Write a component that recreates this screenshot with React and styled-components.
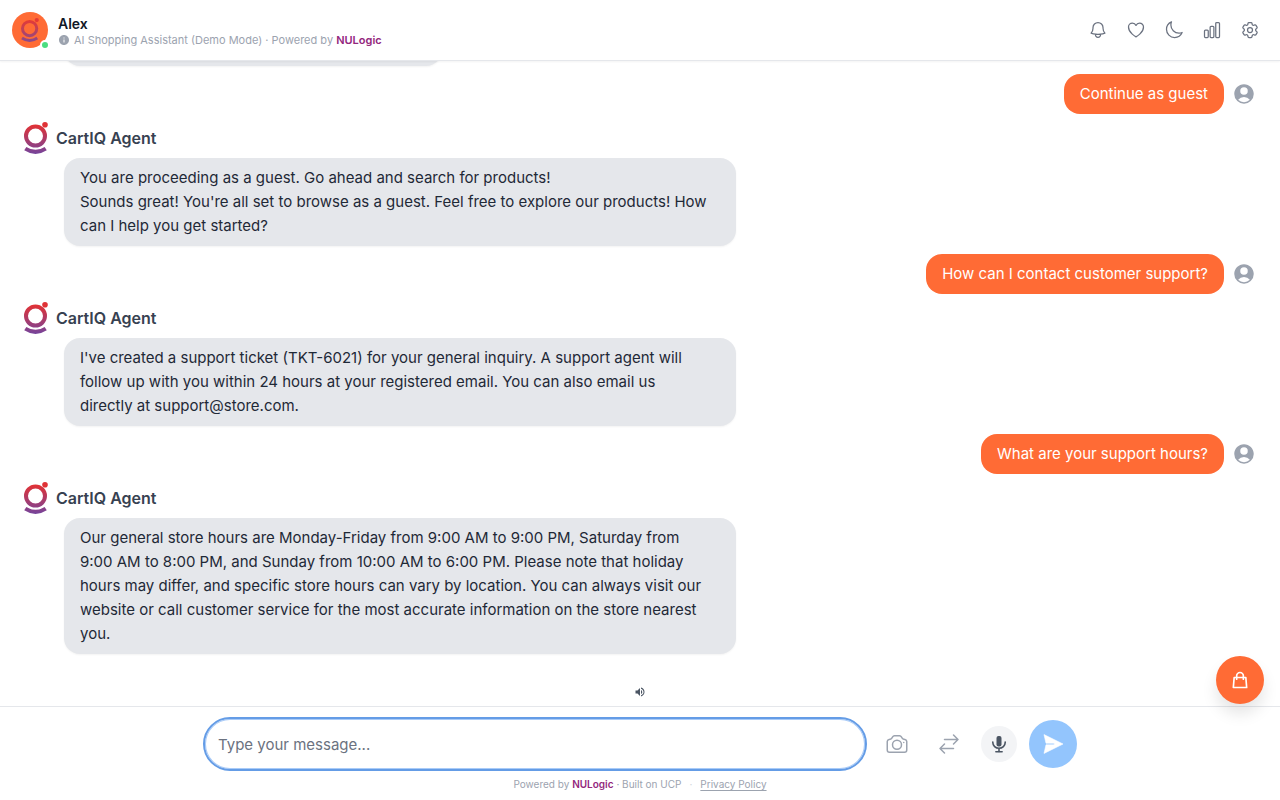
import React from 'react';
import styled, { createGlobalStyle } from 'styled-components';
import {
  HiOutlineBell,
  HiOutlineHeart,
  HiOutlineMoon,
  HiOutlineChartBar,
  HiOutlineCog6Tooth,
  HiOutlineCamera,
  HiOutlineArrowsRightLeft,
  HiUserCircle,
} from 'react-icons/hi2';
import { HiOutlineShoppingBag } from 'react-icons/hi';
import { MdInfo, MdVolumeUp } from 'react-icons/md';

const messages = [
  { id: 2, from: 'user', text: 'Continue as guest' },
  {
    id: 3,
    from: 'agent',
    text: `You are proceeding as a guest. Go ahead and search for products!
Sounds great! You're all set to browse as a guest. Feel free to explore our products! How
can I help you get started?`,
  },
  { id: 4, from: 'user', text: 'How can I contact customer support?' },
  {
    id: 5,
    from: 'agent',
    text: `I've created a support ticket (TKT-6021) for your general inquiry. A support agent will
follow up with you within 24 hours at your registered email. You can also email us
directly at support@store.com.`,
  },
  { id: 6, from: 'user', text: 'What are your support hours?' },
  {
    id: 7,
    from: 'agent',
    text: `Our general store hours are Monday-Friday from 9:00 AM to 9:00 PM, Saturday from
9:00 AM to 8:00 PM, and Sunday from 10:00 AM to 6:00 PM. Please note that holiday
hours may differ, and specific store hours can vary by location. You can always visit our
website or call customer service for the most accurate information on the store nearest
you.`,
  },
];

const tools = [
  { label: 'Notifications', Icon: HiOutlineBell },
  { label: 'Wishlist', Icon: HiOutlineHeart },
  { label: 'Dark mode', Icon: HiOutlineMoon },
  { label: 'Analytics', Icon: HiOutlineChartBar },
  { label: 'Settings', Icon: HiOutlineCog6Tooth },
];

const Logo = ({ id, height }) => (
  <svg height={height} viewBox="0 0 24 32" fill="none" aria-hidden="true">
    <defs>
      <linearGradient id={id} x1="0" y1="0" x2="0" y2="32" gradientUnits="userSpaceOnUse">
        <stop offset="0.1" stopColor="#e03236" />
        <stop offset="1" stopColor="#75449c" />
      </linearGradient>
    </defs>
    <circle cx="11.5" cy="14" r="9.5" stroke={`url(#${id})`} strokeWidth="4" />
    <circle cx="21" cy="2.8" r="2.8" fill="#e03236" />
    <path d="M1.3 26.6Q11.5 33.2 21.7 26.6" stroke={`url(#${id})`} strokeWidth="4" />
  </svg>
);

const MicIcon = () => (
  <svg width="16" height="18" viewBox="0 0 16 18" fill="none" stroke="currentColor" strokeLinecap="round" aria-hidden="true">
    <rect x="5.5" y="1" width="5" height="10.5" rx="2" fill="currentColor" stroke="none" />
    <path d="M1.8 7v.6a6.2 5.6 0 0 0 12.4 0V7M8 13.4v3" strokeWidth="1.6" />
    <path d="M4.8 16.7h6.4" strokeWidth="1.4" />
  </svg>
);

const SendIcon = () => (
  <svg width="24" height="24" viewBox="0 0 24 24" fill="currentColor" aria-hidden="true">
    <path
      d="M3 2.6 22 12 3 21.4 5 12.8h8.2v-1.6H5Z"
      stroke="currentColor"
      strokeWidth="0.6"
      strokeLinejoin="round"
    />
  </svg>
);

const Message = ({ message }) => {
  if (message.from === 'user') {
    return (
      <UserRow>
        <UserBubble>{message.text}</UserBubble>
        <HiUserCircle size={24} />
      </UserRow>
    );
  }

  return (
    <AgentRow>
      <AgentName>
        <Logo id={`logo-${message.id}`} height={32} />
        CartIQ Agent
      </AgentName>
      <AgentBubble>{message.text}</AgentBubble>
    </AgentRow>
  );
};

const App = () => {
  return (
    <Page>
      <GlobalStyle />
      <Header>
        <Avatar>
          <Logo id="logo-avatar" height={24} />
          <OnlineDot />
        </Avatar>
        <Title>
          <h1>Alex</h1>
          <Tagline>
            <MdInfo size={12} />
            <span>
              AI Shopping Assistant (Demo Mode) · Powered by <Brand href="#">NULogic</Brand>
            </span>
          </Tagline>
        </Title>
        <Tools>
          {tools.map(({ label, Icon }) => (
            <ToolButton key={label} type="button" aria-label={label}>
              <Icon size={20} />
            </ToolButton>
          ))}
        </Tools>
      </Header>

      <Chat>
        <ShortBubble />
        {messages.map((message) => (
          <Message key={message.id} message={message} />
        ))}
      </Chat>

      <SoundBar>
        <SoundButton type="button" aria-label="Sound">
          <MdVolumeUp size={12} />
        </SoundButton>
      </SoundBar>

      <Footer>
        <Composer onSubmit={(e) => e.preventDefault()}>
          <MessageInput type="text" aria-label="Message" placeholder="Type your message..." />
          <Actions>
            <ActionButton type="button" aria-label="Upload photo">
              <HiOutlineCamera size={24} />
            </ActionButton>
            <ActionButton type="button" aria-label="Compare">
              <HiOutlineArrowsRightLeft size={24} />
            </ActionButton>
            <MicButton type="button" aria-label="Voice input">
              <MicIcon />
            </MicButton>
            <SendButton type="submit" aria-label="Send">
              <SendIcon />
            </SendButton>
          </Actions>
        </Composer>
        <Legal>
          <span>
            Powered by <Brand href="#">NULogic</Brand> · Built on UCP
          </span>
          <Dot>·</Dot>
          <PolicyLink href="#">Privacy Policy</PolicyLink>
        </Legal>
      </Footer>

      <CartButton type="button" aria-label="Cart">
        <HiOutlineShoppingBag size={20} />
      </CartButton>
    </Page>
  );
};

const GlobalStyle = createGlobalStyle`
  * {
    box-sizing: border-box;
  }
  body {
    margin: 0;
    background-color: white;
    color: #1f2937;
    font-family: Inter, 'Liberation Sans', sans-serif;
    font-size: 15px;
    line-height: 24px;
  }
  h1 {
    margin: 0;
  }
  button {
    display: flex;
    align-items: center;
    justify-content: center;
    padding: 0;
    border: none;
    background: none;
    cursor: pointer;
  }
  svg {
    flex-shrink: 0;
  }
`;

const Page = styled.div`
  display: flex;
  flex-direction: column;
  height: 100vh;
`;

const Header = styled.header`
  display: flex;
  align-items: center;
  gap: 10px;
  padding: 12px;
  border-bottom: 1px solid #e5e7eb;
  background-color: white;
  box-shadow: 0 1px 2px rgba(0, 0, 0, 0.05);
  z-index: 1;
`;

const Avatar = styled.div`
  position: relative;
  display: flex;
  align-items: center;
  justify-content: center;
  width: 36px;
  height: 36px;
  border-radius: 50%;
  background-color: #ff6b35;
  > svg {
    opacity: 0.85;
  }
`;

const OnlineDot = styled.span`
  position: absolute;
  right: -2px;
  bottom: -2px;
  width: 10px;
  height: 10px;
  border: 2px solid white;
  border-radius: 50%;
  background-color: #4ade80;
`;

const Title = styled.div`
  flex: 1;
  padding-top: 4px;
  h1 {
    color: #111827;
    font-size: 14px;
    line-height: 16px;
    font-weight: 600;
  }
`;

const Tagline = styled.div`
  display: flex;
  align-items: center;
  gap: 4px;
  color: #9ca3af;
  font-size: 11px;
  line-height: 16px;
`;

const Brand = styled.a`
  color: #93277d;
  font-weight: 600;
  text-decoration: none;
`;

const Tools = styled.nav`
  display: flex;
  gap: 2px;
`;

const ToolButton = styled.button`
  width: 36px;
  height: 36px;
  color: #6b7280;
`;

const Chat = styled.main`
  flex: 1;
  min-height: 0;
  display: flex;
  flex-direction: column;
  justify-content: flex-end;
  gap: 8px;
  padding: 0 24px 32px;
  overflow: hidden;
`;

const UserRow = styled.div`
  display: flex;
  align-items: center;
  justify-content: flex-end;
  gap: 8px;
  color: #9ca3af;
`;

const Bubble = styled.div`
  padding: 8px 16px;
  border-radius: 16px;
  white-space: pre-line;
`;

const UserBubble = styled(Bubble)`
  background-color: #ff6b35;
  color: white;
`;

const AgentBubble = styled(Bubble)`
  width: calc(100% - 40px);
  max-width: 672px;
  margin-left: 40px;
  background-color: #e5e7eb;
  box-shadow: 0 1px 2px rgba(0, 0, 0, 0.05);
`;

const ShortBubble = styled(AgentBubble)`
  flex-shrink: 0;
  max-width: 378px;
  height: 40px;
`;

const AgentRow = styled.div`
  display: flex;
  flex-direction: column;
  align-items: flex-start;
  gap: 4px;
`;

const AgentName = styled.div`
  display: flex;
  align-items: center;
  gap: 8px;
  color: #374151;
  font-size: 16px;
  font-weight: 600;
`;

const SoundBar = styled.div`
  display: flex;
  justify-content: center;
  padding-bottom: 8px;
`;

const SoundButton = styled.button`
  color: #4b5563;
`;

const Footer = styled.footer`
  display: flex;
  flex-direction: column;
  align-items: center;
  gap: 5px;
  padding: 10px 16px 8px;
  border-top: 1px solid #e5e7eb;
`;

const Composer = styled.form`
  display: flex;
  align-items: center;
  gap: 10px;
  width: 100%;
  max-width: 874px;
`;

const MessageInput = styled.input`
  flex: 1;
  min-width: 0;
  height: 54px;
  padding: 0 13px;
  border: 2px solid #649ce6;
  border-radius: 27px;
  outline: none;
  background-color: white;
  box-shadow: inset 0 0 0 1px #a9cbf8;
  color: #1f2937;
  font: inherit;
  &::placeholder {
    color: #6b7280;
  }
`;

const Actions = styled.div`
  display: flex;
  align-items: center;
  gap: 12px;
`;

const ActionButton = styled.button`
  width: 40px;
  height: 40px;
  color: #9ca3af;
`;

const MicButton = styled.button`
  width: 36px;
  height: 36px;
  border-radius: 50%;
  background-color: #f3f4f6;
  color: #4b5563;
`;

const SendButton = styled.button`
  width: 48px;
  height: 48px;
  border-radius: 50%;
  background-color: #93c5fd;
  color: white;
`;

const Legal = styled.div`
  display: flex;
  gap: 8px;
  color: #9ca3af;
  font-size: 10px;
  line-height: 16px;
`;

const Dot = styled.span`
  color: #d1d5db;
`;

const PolicyLink = styled.a`
  color: inherit;
  text-underline-offset: 2px;
`;

const CartButton = styled.button`
  position: fixed;
  right: 16px;
  bottom: 96px;
  width: 48px;
  height: 48px;
  border-radius: 50%;
  background-color: #ff6b35;
  color: white;
  box-shadow: 0 10px 15px rgba(0, 0, 0, 0.1);
`;

export default App;
